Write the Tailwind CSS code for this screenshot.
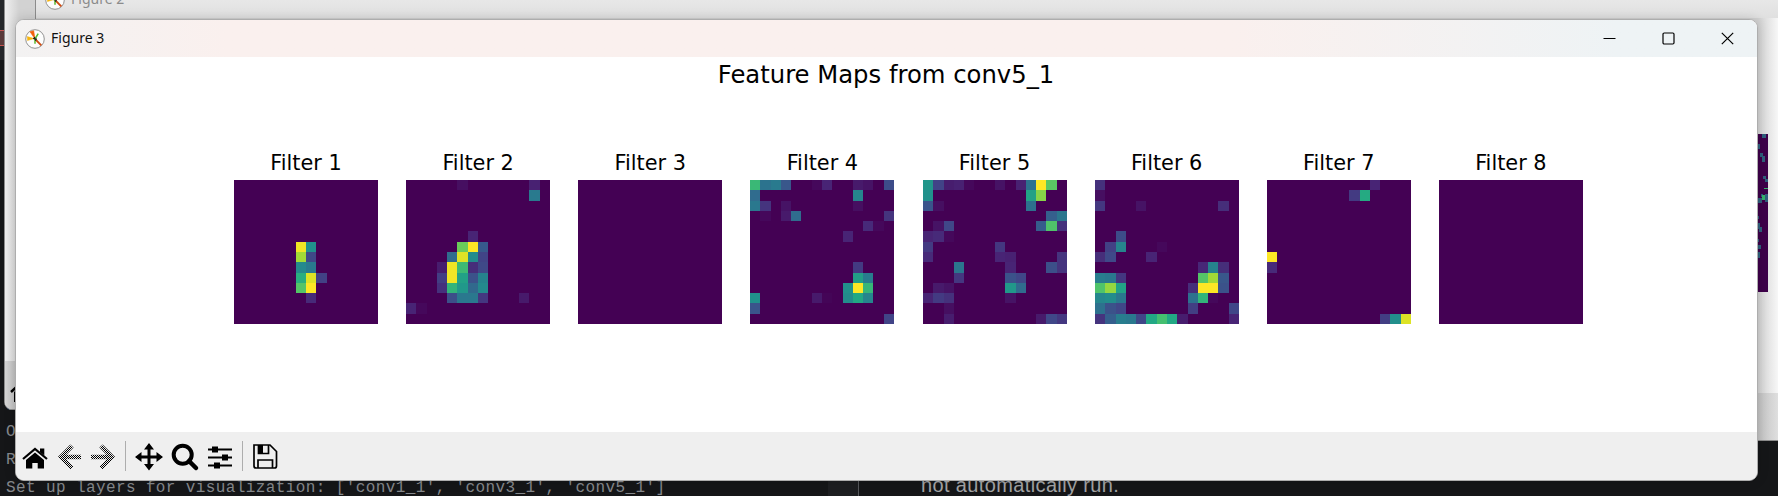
<!DOCTYPE html>
<html lang="en">
<head>
<meta charset="utf-8">
<title>Figure 3</title>
<script src="https://cdn.jsdelivr.net/npm/@tailwindcss/browser@4"></script>
</head>
<body class="relative h-[496px] w-[1778px] overflow-hidden bg-[#151618]">

<!-- editor strip and terminal behind the windows -->
<div class="absolute left-0 top-0 h-[60px] w-1 bg-[#25272a]"></div>
<div class="absolute left-0 top-[30px] h-4 w-1 border-y border-[#c75450] bg-[#5a3a3b]"></div>
<div class="absolute left-[6px] top-[392px] font-['Liberation_Mono'] text-[16px] leading-7 text-[#85888c]">O</div>
<div class="absolute left-[6px] top-[418px] font-['Liberation_Mono'] text-[16px] leading-7 text-[#85888c]">O</div>
<div class="absolute left-[6px] top-[446px] font-['Liberation_Mono'] text-[16px] leading-7 text-[#85888c]">R</div>
<div class="absolute left-[6px] top-[474px] whitespace-pre font-['Liberation_Mono'] text-[16px] leading-[28px] tracking-[0.39px] text-[#85888c]">Set up layers for visualization: ['conv1_1', 'conv3_1', 'conv5_1']</div>
<div class="absolute left-[828px] top-[478px] h-[18px] w-[30px] bg-[#1d1e21]"></div>
<div class="absolute left-[858px] top-[478px] h-[18px] w-px bg-[#55575b]"></div>
<div class="absolute left-[921px] top-[471px] whitespace-pre font-['Liberation_Sans'] text-[20px] leading-7 tracking-[0.37px] text-[#a2a3a5]">not automatically run.</div>

<!-- Figure 1 window, left edge -->
<div class="absolute left-1 top-[-20px] flex h-[430px] w-[400px] flex-col overflow-hidden rounded-lg border border-[#8d8d8d] bg-linear-to-r from-[#efefef] from-[0px] to-[#d2d2d2] to-[14px]">
  <div class="mt-auto h-[48px] bg-linear-to-r from-[#d6d6d6] from-[0px] to-[#bcbcbc] to-[12px] pt-4 pl-[4px]">
    <svg class="size-7" viewBox="0 0 28 28"><path d="M2 15 14 4l12 11" fill="none" stroke="#000" stroke-width="2.4"/><path d="M5 15v10h18V15L14 7z"/></svg>
  </div>
</div>

<!-- Figure 2 window -->
<div class="absolute left-[35px] top-[-20px] flex h-[461px] w-[1760px] flex-col border border-[#8c8c8c] bg-[#f1f1f1]">
  <div class="flex h-[37px] items-center gap-[6px] bg-linear-to-b from-[#efefef] to-[#e0e0e0] pl-[9px] text-[#8b8b8b]">
    <svg class="size-5 shrink-0" viewBox="0 0 20 20"><use href="#mpl"/></svg>
    <span class="-mt-[2px] font-['Noto_Sans'] text-[14px] leading-5">Figure 2</span>
  </div>
  <div class="flex grow justify-end bg-linear-to-r from-[#d1d1d1] from-[1722px] to-[#f7f7f7] to-[1742px] pt-[116px]">
    <svg class="mr-[26px] h-[158px] w-[11px]" viewBox="0 0 11 158"><path fill="#3d0049" d="M0 0h11v158H0z"/>
      <g fill="#2f5f7c"><path d="M5 0h4v4H5zM0 10h3v5H0zM3 19h3v4H3zM5 22h3v6H5zM6 42h3v3H6zM8 45h3v3H8zM1 64h4v5H1zM4 60h2v3H4zM8 60h3v8H8zM0 82h2v3H0zM0 89h3v6H0zM2 93h3v5H2zM0 105h2v3H0zM0 111h4v4H0zM0 118h3v6H0z"/></g>
      <g fill="#37b36c"><path d="M5 61h3v5H5zM7 54h4v1H7z"/></g></svg>
  </div>
  <div class="h-[47px] bg-linear-to-r from-[#c1c1c1] from-[1722px] to-[#dfdfdf] to-[1742px]"></div>
</div>

<!-- Figure 3 window -->
<main class="absolute left-[15px] top-[19px] flex h-[462px] w-[1743px] flex-col overflow-hidden rounded-[9px] border border-[#adadad] bg-white shadow-[0_0_12px_rgba(0,0,0,0.16)]">
  <header class="flex h-[37px] shrink-0 items-center bg-linear-to-r from-[#f3f2f2] from-0% via-[#faf0ee] via-12% to-[#faf0ee] to-68%">
    <div class="flex h-full w-full items-center bg-linear-to-r from-[#eef3f5]/0 from-70% to-[#eef3f5] to-92% pl-[9px] pr-[23px]">
    <svg class="size-5" viewBox="0 0 20 20">
      <g id="mpl">
        <circle cx="10" cy="10" r="9.3" fill="#fdfdfd" stroke="#777" stroke-width=".8"/>
        <path d="m10 10-5-7.2 3.700-1z" fill="#f2600c" stroke="#f2600c" stroke-width=".6"/>
        <path d="M9 9.600 2.500 11.500 2.300 7.600z" fill="#f7b50c" stroke="#f7b50c" stroke-width=".5"/>
        <path d="m10 10 6.300 6.300" stroke="#cf4a10" stroke-width="1.900"/>
        <path d="m10 10 3.200-5.400M10 10v4.800" stroke="#58b92e" stroke-width="1.500"/>
        <path d="m8 9.500 4 .7M9.200 8l1.600 3.800" stroke="#222" stroke-width="1.200"/>
      </g>
    </svg>
    <span class="-mt-[2px] ml-[6px] font-['Noto_Sans'] text-[14px] leading-5 text-[#111]">Figure 3</span>
    <div class="ml-auto flex gap-[46px] text-black">
      <svg class="size-[13px]" viewBox="0 0 13 13"><path d="M.5 6.500h12" stroke="currentColor"/></svg>
      <svg class="size-[13px]" viewBox="0 0 13 13"><rect x="1" y="1" width="11" height="11" rx="1.200" fill="none" stroke="currentColor" stroke-width="1.200"/></svg>
      <svg class="size-[13px]" viewBox="0 0 13 13"><path d="m.8.8 11.400 11.400m0-11.400L.8 12.200" stroke="currentColor" stroke-width="1.200"/></svg>
    </div>
    </div>
  </header>

  <section class="flex grow flex-col items-center font-['DejaVu_Sans'] text-black">
    <h1 class="mt-[3px] pr-[1px] text-[24.3px] leading-[30px]">Feature Maps from conv5_1</h1>
    <div id="plots" class="mt-[61px] mr-auto ml-[218px] grid grid-cols-[repeat(8,172.14px)]"></div>
  </section>

  <footer class="flex h-[48px] shrink-0 items-center bg-[#efefef] text-black">
    <svg class="ml-[5px] h-[46px] w-[270px]" viewBox="21 433 270 46">
      <defs><pattern id="dots" width="2" height="2" patternUnits="userSpaceOnUse"><path d="M0 0h1v1H0zM1 1h1v1H1z"/></pattern></defs>
      <path d="m23 459 12-10 12 10" fill="none" stroke="#000" stroke-width="2.2"/>
      <path d="M40 448.500h4.300v7L40 452zM26 460l9-7.600 9 7.600v8.500h-6.300V463h-5.400v5.500H26z"/>
      <g fill="none" stroke="url(#dots)" stroke-width="4.500"><path d="M81 457H61M72 446l-11 11 11 11M91 457h20M101 446l11 11-11 11"/></g>
      <path d="M125.500 441v30M242.500 441v30" stroke="#adadad"/>
      <path d="M149 447v20M139 457h20" stroke="#000" stroke-width="3"/>
      <path d="m149 443 5 6.500h-10zM149 470.500l5-6.500h-10zM135 457l6.500-5v10zM163 457l-6.500-5v10z"/>
      <circle cx="182.700" cy="454.700" r="9" fill="none" stroke="#000" stroke-width="4"/><path d="m189 461 7 7" stroke="#000" stroke-width="4.500" stroke-linecap="round"/>
      <path d="M208 449.500h24M208 457.500h24M208 465.500h24" stroke="#000" stroke-width="1.800"/>
      <path d="M212 446.500h6v6h-6zM222 454.500h6v6h-6zM214 462.500h6v6h-6z"/>
      <path d="M254 445h16l6.500 6.500V466a2 2 0 0 1-2 2H256a2 2 0 0 1-2-2zM258 468v-8h14.500v8M258.500 445v8.500h10V445" fill="none" stroke="#000" stroke-width="1.700"/><path d="M258 445h5v9h-5z"/>
    </svg>
  </footer>
</main>

<script>
const stops = ["440154","482475","414487","355f8d","2a788e","21918c","22a884","44bf70","7ad151","bddf26","fde725"]
  .map(h => [0, 2, 4].map(i => parseInt(h.slice(i, i + 2), 16)));
function viridis(t) {
  const k = Math.min(9, Math.floor(t * 10)), f = t * 10 - k;
  return "rgb(" + stops[k].map((c, i) => Math.round(c + (stops[k + 1][i] - c) * f)).join() + ")";
}
// Non-zero activations of each 14x14 map: "row: column=percent ..."
const maps = [
"6: 6=98 7=50; 7: 6=86 7=22; 8: 6=47 7=41; 9: 6=62 7=95 8=19; 10: 6=73 7=100; 11: 7=12",
"0: 5=4 12=9; 1: 12=41; 5: 6=10; 6: 5=77 6=100 7=28; 7: 4=35 5=95 6=48 7=20; 8: 3=8 4=98 5=68 6=13 7=22; 9: 3=18 4=98 5=57 6=25 7=44; 10: 3=14 4=65 5=53 6=34 7=47; 11: 4=24 5=40 6=40 7=16 11=7; 12: 0=10 1=2",
"",
"0: 0=67 1=38 2=41 3=27 6=2 7=10 10=7 11=5 13=23; 1: 0=35 10=45; 2: 0=40 1=15 3=5 10=4; 3: 1=2 3=7 4=35 13=15; 4: 11=12 12=2; 5: 9=10; 8: 10=17; 9: 10=56 11=42; 10: 9=50 10=100 11=66; 11: 0=50 6=7 7=1 9=48 10=60 11=45; 12: 0=26; 13: 13=20",
"0: 0=52 1=20 2=8 3=9 4=2 7=5 9=9 10=37 11=100 12=74; 1: 0=50 10=57 11=82; 2: 0=26 1=4 10=37; 3: 12=30 13=39; 4: 1=5 2=21 11=29 12=72 13=14; 5: 0=10 1=12 2=2; 6: 0=17 7=16; 7: 0=12 7=10 8=9 13=15; 8: 3=39 8=10 12=24 13=15; 9: 3=16 8=25 9=21; 10: 1=7 2=5 8=53 9=35; 11: 0=10 1=17 2=14 8=5; 12: 2=4; 13: 2=8 11=7 12=21 13=16",
"0: 0=14; 1: 0=4; 2: 0=16 4=5 12=13; 5: 2=23; 6: 1=19 2=45 6=2; 7: 0=13 1=22 5=10; 8: 10=11 11=44 12=13; 9: 0=42 1=40 2=16 10=73 11=86 12=27; 10: 0=72 1=84 2=58 9=13 10=100 11=100 12=25; 11: 0=46 1=48 2=40 9=37 10=65 11=2; 12: 0=37 1=25 2=21 9=18 13=21; 13: 0=15 1=30 2=42 3=40 4=21 5=60 6=70 7=60 8=8 13=10",
"0: 10=10; 1: 8=17 9=61; 7: 0=100; 8: 0=12; 13: 11=18 12=49 13=95",
""];
const edge = i => Math.round(i * 144 / 14);
document.getElementById("plots").innerHTML = maps.map((m, n) => {
  let cells = "";
  for (const line of m.split(";")) {
    if (!line.trim()) continue;
    const [r, list] = line.split(":"), y = edge(+r);
    for (const item of list.trim().split(" ")) {
      const [c, v] = item.split("=").map(Number), x = edge(c);
      cells += `<rect x="${x}" y="${y}" width="${edge(c + 1) - x}" height="${edge(+r + 1) - y}" fill="${viridis(v / 100)}"/>`;
    }
  }
  return `<figure class="flex w-[144px] flex-col items-center"><figcaption class="h-[29px] whitespace-nowrap text-[20.83px] leading-[24px]">Filter ${n + 1}</figcaption><svg class="size-[144px]" viewBox="0 0 144 144" shape-rendering="crispEdges"><rect width="144" height="144" fill="#440154"/>${cells}</svg></figure>`;
}).join("");
</script>
</body>
</html>
